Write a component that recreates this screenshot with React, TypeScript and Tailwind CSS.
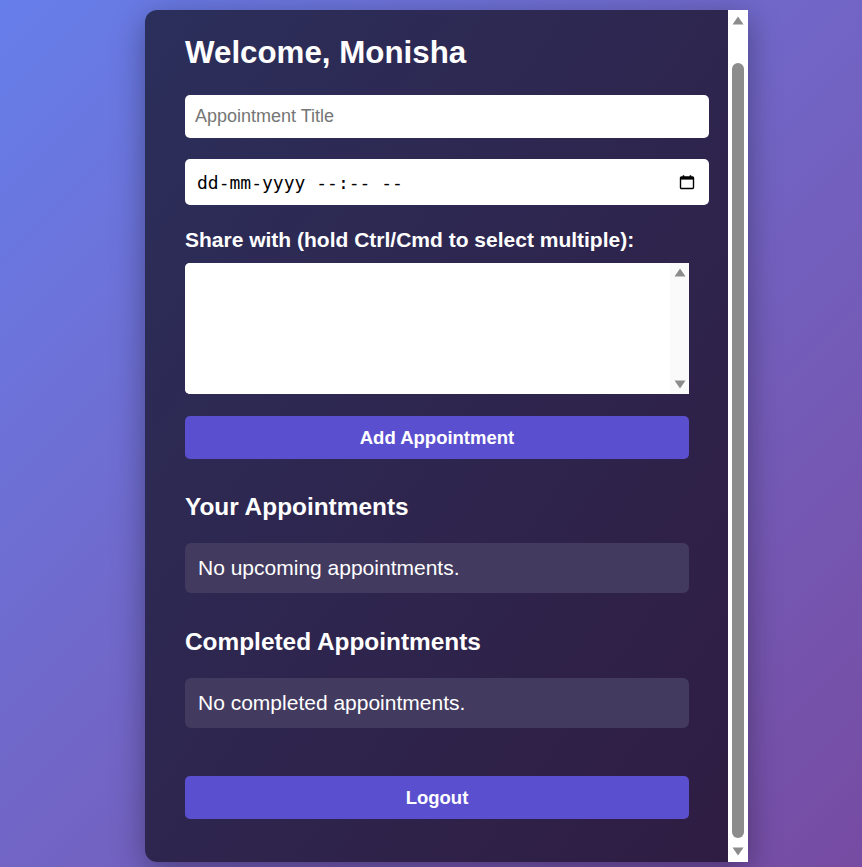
const sans = "font-['Liberation_Sans',Arial,sans-serif]";

function Triangle({ up, className }: { up?: boolean; className?: string }) {
  return (
    <svg viewBox="0 0 12 9" className={className} fill="#8c8c8c">
      {up ? <path d="M6 0.5 L11.5 8.5 H0.5 Z" /> : <path d="M0.5 0.5 H11.5 L6 8.5 Z" />}
    </svg>
  );
}

function CalendarIcon() {
  return (
    <svg viewBox="0 0 16 16" className="h-[16px] w-[16px]" fill="none" stroke="#000">
      <rect x="1.5" y="3" width="13" height="11.5" rx="1" strokeWidth="1.4" />
      <rect x="1.5" y="3" width="13" height="2.6" fill="#000" strokeWidth="0" />
      <path d="M4.5 1.2 V3.5 M11.5 1.2 V3.5" strokeWidth="1.6" />
    </svg>
  );
}

function EmptyBox({ text }: { text: string }) {
  return (
    <div className="mt-[22px] flex h-[50px] items-center rounded-[6px] bg-[#433b5f] px-[13px] text-[21px] leading-[24px] text-white">
      {text}
    </div>
  );
}

export default function App() {
  return (
    <div className={`h-screen overflow-hidden bg-gradient-to-br from-[#667eea] to-[#764ba2] pt-[10px] pl-[145px] ${sans}`}>
      <div className="flex h-[852px] w-[603px] overflow-hidden rounded-l-xl bg-gradient-to-br from-[#2b2f5b] to-[#2f1c42] shadow-[0_8px_32px_rgba(0,0,0,0.35)]">
        <div className="w-[583px] overflow-hidden pt-[25px] pr-[39px] pl-[40px] text-white">
          <h1 className="text-[31.3px] font-bold leading-[36px]">Welcome, Monisha</h1>

          <input
            type="text"
            placeholder="Appointment Title"
            className="mt-[24px] block h-[43px] w-[524px] rounded-[5px] border-0 bg-white px-[10px] text-[18px] text-black outline-none placeholder:text-[#757575]"
          />

          <div className="mt-[21px] flex h-[46px] w-[524px] items-center rounded-[5px] bg-white pr-[14px] pl-[12px]">
            <input
              type="text"
              placeholder="dd-mm-yyyy --:-- --"
              className="min-w-0 flex-1 bg-transparent font-['DejaVu_Sans_Mono',monospace] text-[18px] whitespace-pre text-black outline-none placeholder:text-black"
            />
            <CalendarIcon />
          </div>

          <label className="mt-[23px] block text-[21px] font-bold leading-[24px]">
            Share with (hold Ctrl/Cmd to select multiple):
          </label>
          <div className="mt-[11px] flex h-[131px] w-full overflow-hidden rounded-l-[5px] bg-white">
            <select multiple className="h-full min-w-0 flex-1 border-0 bg-white text-[16px] text-black outline-none" />
            <div className="flex w-[19px] flex-col items-center justify-between bg-[#fafafa] py-[5px]">
              <Triangle up className="h-[9px] w-[12px]" />
              <Triangle className="h-[9px] w-[12px]" />
            </div>
          </div>

          <button
            type="button"
            className="mt-[22px] block h-[43px] w-full rounded-[5px] bg-[#5a4fcf] text-[18.5px] font-bold text-white"
          >
            Add Appointment
          </button>

          <h2 className="mt-[34px] text-[24.4px] font-bold leading-[28px]">Your Appointments</h2>
          <EmptyBox text="No upcoming appointments." />

          <h2 className="mt-[35px] text-[24.4px] font-bold leading-[28px]">Completed Appointments</h2>
          <EmptyBox text="No completed appointments." />

          <button
            type="button"
            className="mt-[48px] block h-[43px] w-full rounded-[5px] bg-[#5a4fcf] text-[18.5px] font-bold text-white"
          >
            Logout
          </button>
        </div>

        {/* page scrollbar, drawn as the reference shows it */}
        <div className="flex w-[20px] flex-col items-center bg-white pt-[6px] pb-[6px]">
          <Triangle up className="h-[9px] w-[12px]" />
          <div className="mt-[38px] w-[12px] flex-1 rounded-full bg-[#8c8c8c]" />
          <Triangle className="mt-[9px] h-[9px] w-[12px]" />
        </div>
      </div>
    </div>
  );
}
